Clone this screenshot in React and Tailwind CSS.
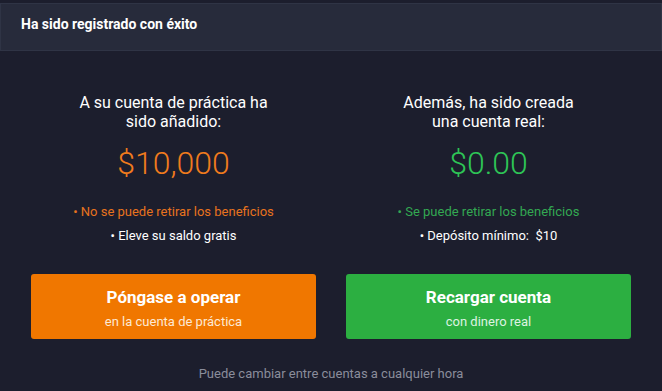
export default function App() {
  return (
    <div className="w-[662px] h-[391px] bg-[#1c1e2d] overflow-hidden flex flex-col text-white" style={{ fontFamily: "Roboto, 'Noto Sans', sans-serif" }}>
      <div className="mt-[3px] h-[48px] shrink-0 bg-[#272b3b] border border-[#2f3445] flex items-center pl-[20px] pb-[5px]">
        <h1 className="text-[14px] font-bold text-white">Ha sido registrado con éxito</h1>
      </div>

      <div className="flex-1 flex flex-col px-[31px]">
        <div className="grid grid-cols-2 gap-[30px] pt-[42px]">
          <div className="flex flex-col items-center text-center">
            <p className="text-[16px] leading-[19px] text-white w-[215px]">A su cuenta de práctica ha sido añadido:</p>
            <p className="mt-[12px] text-[32px] leading-[40px] font-light text-[#f07b1d]">$10,000</p>
            <p className="mt-[21px] text-[13px] leading-[16px] text-[#e8731e]">• No se puede retirar los beneficios</p>
            <p className="mt-[8px] text-[13px] leading-[16px] text-white">• Eleve su saldo gratis</p>
          </div>
          <div className="flex flex-col items-center text-center">
            <p className="text-[16px] leading-[19px] text-white w-[200px]">Además, ha sido creada una cuenta real:</p>
            <p className="mt-[12px] text-[32px] leading-[40px] font-light text-[#2ec456]">$0.00</p>
            <p className="mt-[21px] text-[13px] leading-[16px] text-[#33a852]">• Se puede retirar los beneficios</p>
            <p className="mt-[8px] text-[13px] leading-[16px] text-white">• Depósito mínimo:&nbsp; $10</p>
          </div>
        </div>

        <div className="grid grid-cols-2 gap-[30px] mt-[30px]">
          <button className="h-[65px] rounded-[3px] bg-[#f07700] flex flex-col items-center justify-center pt-[4px]">
            <span className="text-[17px] leading-[20px] font-bold text-white">Póngase a operar</span>
            <span className="mt-[7px] text-[13px] leading-[16px] text-[#fde9d4]">en la cuenta de práctica</span>
          </button>
          <button className="h-[65px] rounded-[3px] bg-[#2caf41] flex flex-col items-center justify-center pt-[4px]">
            <span className="text-[17px] leading-[20px] font-bold text-white">Recargar cuenta</span>
            <span className="mt-[7px] text-[13px] leading-[16px] text-[#def3e1]">con dinero real</span>
          </button>
        </div>

        <p className="mt-[27px] text-center text-[13px] leading-[16px] text-[#8a8d9b]">Puede cambiar entre cuentas a cualquier hora</p>
      </div>
    </div>
  );
}
